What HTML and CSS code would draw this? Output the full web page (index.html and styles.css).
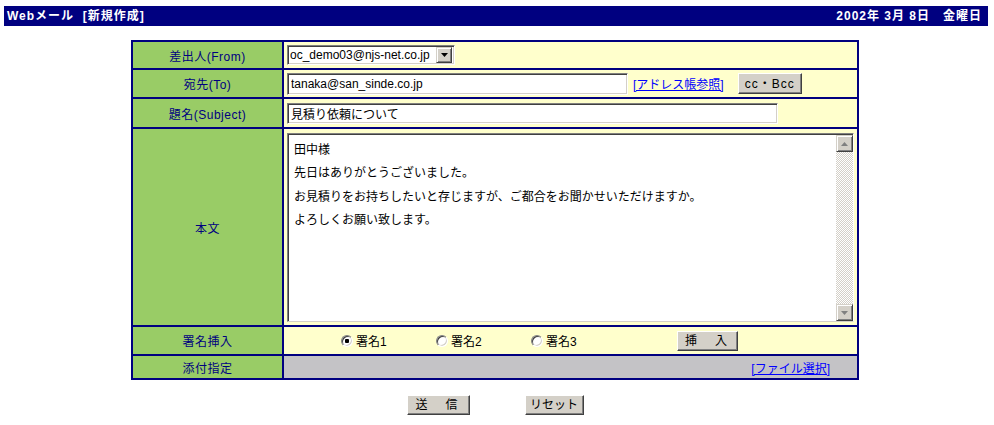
FILE: index.html
```html
<!DOCTYPE html>
<html lang="ja">
<head>
  <meta charset="UTF-8">
  <title>Webメール [新規作成]</title>
  <link rel="stylesheet" href="styles.css">
</head>
<body>
  <div class="titlebar">
    <span>Webメール&nbsp;&nbsp;[新規作成]</span>
    <span>2002年 3月 8日&nbsp;&nbsp;&nbsp;金曜日</span>
  </div>

  <table class="compose">
    <tr class="row-from">
      <th>差出人(From)</th>
      <td>
        <div class="select">
          <span class="select-text">oc_demo03@njs-net.co.jp</span>
          <span class="select-btn">
            <svg width="7" height="4" viewBox="0 0 7 4"><path d="M0 0h7L3.5 4z" fill="#000"/></svg>
          </span>
        </div>
      </td>
    </tr>
    <tr class="row-to">
      <th>宛先(To)</th>
      <td>
        <div class="inline">
          <input class="field field-to" type="text" value="tanaka@san_sinde.co.jp">
          <a class="link" href="#">[アドレス帳参照]</a>
          <button class="btn btn-cc" type="button">cc・Bcc</button>
        </div>
      </td>
    </tr>
    <tr class="row-subject">
      <th>題名(Subject)</th>
      <td><input class="field field-subject" type="text" value="見積り依頼について"></td>
    </tr>
    <tr class="row-body">
      <th>本文</th>
      <td>
        <div class="textarea">
          <div class="textarea-text">
            <p>田中様</p>
            <p>先日はありがとうございました。</p>
            <p>お見積りをお持ちしたいと存じますが、ご都合をお聞かせいただけますか。</p>
            <p>よろしくお願い致します。</p>
          </div>
          <div class="scrollbar">
            <span class="sb-btn"><svg width="7" height="4" viewBox="0 0 7 4"><path d="M3.5 0L7 4H0z" fill="#808080"/></svg></span>
            <span class="sb-track"></span>
            <span class="sb-btn"><svg width="7" height="4" viewBox="0 0 7 4"><path d="M0 0h7L3.5 4z" fill="#808080"/></svg></span>
          </div>
        </div>
      </td>
    </tr>
    <tr class="row-sign">
      <th>署名挿入</th>
      <td>
        <div class="sign">
          <label class="sign-opt"><input type="radio" name="sign" checked>署名1</label>
          <label class="sign-opt"><input type="radio" name="sign">署名2</label>
          <label class="sign-opt"><input type="radio" name="sign">署名3</label>
          <button class="btn btn-insert" type="button">挿　入</button>
        </div>
      </td>
    </tr>
    <tr class="row-attach">
      <th>添付指定</th>
      <td class="attach"><a class="link" href="#">[ファイル選択]</a></td>
    </tr>
  </table>

  <div class="actions">
    <button class="btn btn-send" type="button">送　信</button>
    <button class="btn btn-reset" type="button">リセット</button>
  </div>
</body>
</html>
```

FILE: styles.css
```css
body {
  margin: 0;
  padding: 6px 6px 0 4px;
  font-family: "Liberation Sans", "Noto Sans CJK JP", sans-serif;
  font-size: 12px;
  color: #000;
  background: #fff;
}

.titlebar {
  display: flex;
  justify-content: space-between;
  align-items: center;
  height: 20px;
  padding: 0 6px 0 3px;
  background-color: #000080;
  color: #fff;
  font-weight: bold;
  line-height: 20px;
  letter-spacing: 1px;
}

.compose {
  margin: 14px 0 0 127px;
  border-collapse: separate;
  border-spacing: 2px;
  background-color: #000080;
}

.compose th {
  width: 149px;
  padding: 0;
  background-color: #99cc66;
  color: #000080;
  font-weight: normal;
  text-align: center;
  vertical-align: middle;
  letter-spacing: 0.5px;
}

.compose td {
  width: 567px;
  padding: 0 3px;
  background-color: #ffffcc;
  vertical-align: middle;
}

.row-from th, .row-from td { height: 26px; }
.row-to th, .row-to td { height: 27px; }
.row-subject th, .row-subject td { height: 28px; }
.row-body th, .row-body td { height: 196px; }
.row-sign th, .row-sign td { height: 27px; }
.row-attach th, .row-attach td { height: 22px; }

.select {
  display: flex;
  align-items: center;
  width: 168px;
  height: 20px;
  box-sizing: border-box;
  border: 1px solid;
  border-color: #808080 #fff #fff #808080;
  box-shadow: inset 1px 1px #404040, inset -1px -1px #d4d0c8;
  background: #fff;
  padding: 2px;
}

.select-text {
  flex: 1;
  line-height: 16px;
  white-space: nowrap;
  overflow: hidden;
}

.select-btn {
  display: flex;
  align-items: center;
  justify-content: center;
  width: 16px;
  height: 16px;
  box-sizing: border-box;
  background: #d4d0c8;
  border: 1px solid;
  border-color: #d4d0c8 #404040 #404040 #d4d0c8;
  box-shadow: inset 1px 1px #fff, inset -1px -1px #808080;
}

.inline {
  display: flex;
  align-items: center;
}

.field {
  height: 22px;
  box-sizing: border-box;
  margin: 0;
  padding: 0 3px;
  border: 1px solid;
  border-color: #808080 #fff #fff #808080;
  box-shadow: inset 1px 1px #404040, inset -1px -1px #d4d0c8;
  font-family: inherit;
  font-size: 12px;
  color: #000;
  background: #fff;
  outline: none;
}

.field-to {
  width: 341px;
}

.field-subject {
  display: block;
  width: 491px;
  height: 21px;
}

.link {
  color: #0000ff;
  text-decoration: underline;
}

.inline .link {
  margin-left: 5px;
}

.btn {
  height: 21px;
  box-sizing: border-box;
  margin: 0;
  padding: 0;
  background: #d4d0c8;
  border: 1px solid;
  border-color: #fff #404040 #404040 #fff;
  box-shadow: inset -1px -1px #808080;
  font-family: inherit;
  font-size: 12px;
  color: #000;
  line-height: 18px;
}

.btn-cc {
  width: 64px;
  margin-left: 14px;
  letter-spacing: 1px;
}

.textarea {
  display: flex;
  width: 567px;
  height: 189px;
  box-sizing: border-box;
  margin: 1px 0 0;
  border: 1px solid;
  border-color: #808080 #fff #d4d0c8 #808080;
  box-shadow: inset 1px 1px #404040;
  background: #fff;
  padding: 1px 0 0 1px;
}

.textarea-text {
  flex: 1;
  padding: 4px 0 0 5px;
}

.textarea-text p {
  margin: 0;
  line-height: 23.3px;
}

.scrollbar {
  display: flex;
  flex-direction: column;
  width: 17px;
}

.sb-btn {
  display: flex;
  align-items: center;
  justify-content: center;
  height: 17px;
  box-sizing: border-box;
  background: #d4d0c8;
  border: 1px solid;
  border-color: #d4d0c8 #404040 #404040 #d4d0c8;
  box-shadow: inset 1px 1px #fff, inset -1px -1px #808080;
}

.sb-track {
  flex: 1;
  background-image: repeating-conic-gradient(#d4d0c8 0 25%, #fff 0 50%);
  background-size: 2px 2px;
}

.sign {
  display: flex;
  align-items: center;
  padding-left: 54px;
}

.sign-opt {
  display: flex;
  align-items: center;
  width: 95px;
}

.sign-opt input {
  appearance: none;
  width: 12px;
  height: 12px;
  margin: 0 3px 0 0;
  border-radius: 50%;
  border: 1px solid;
  border-color: #808080 #fff #fff #808080;
  box-shadow: inset 1px 1px #404040, inset -1px -1px #d4d0c8;
  background: #fff;
}

.sign-opt input:checked {
  background: radial-gradient(circle, #000 0 2px, #fff 2.5px);
}

.btn-insert {
  width: 61px;
  height: 20px;
  margin-left: 51px;
  letter-spacing: 3px;
}

.compose td.attach {
  background-color: #c4c3c6;
  text-align: right;
}

.attach .link {
  margin-right: 24px;
}

.actions {
  display: flex;
  justify-content: center;
  gap: 55px;
  margin-top: 15px;
  padding-right: 2px;
}

.btn-send {
  width: 63px;
  height: 20px;
  letter-spacing: 3px;
}

.btn-reset {
  width: 59px;
  height: 20px;
}
```
